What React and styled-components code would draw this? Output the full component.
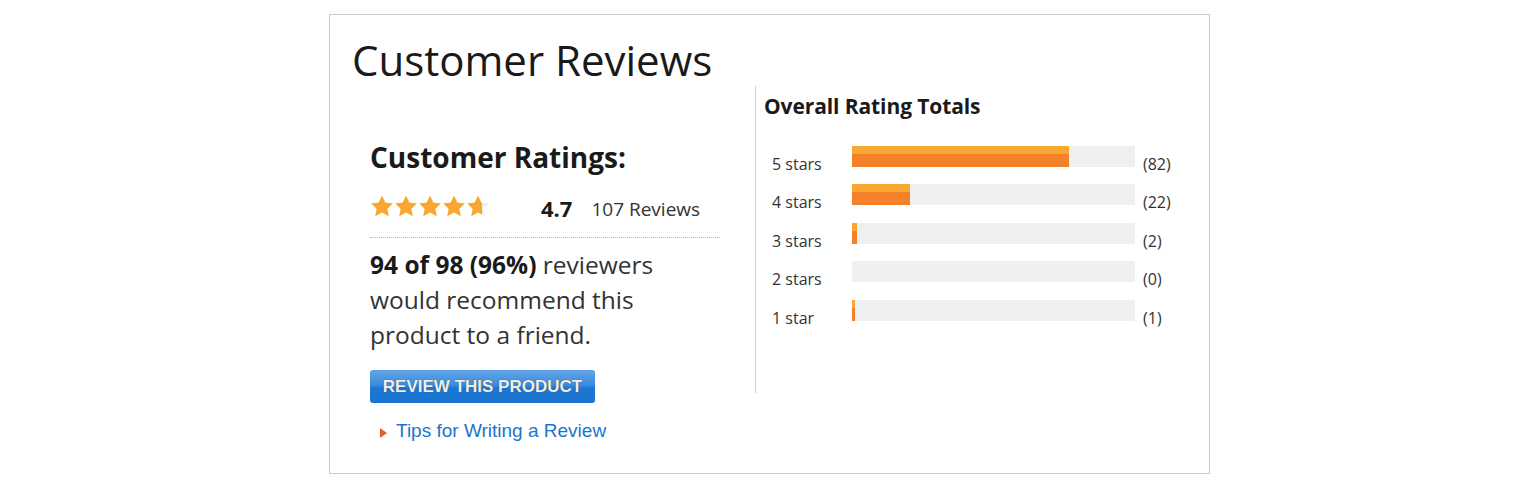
import React from "react";
import styled, { createGlobalStyle } from "styled-components";

const GlobalStyle = createGlobalStyle`
  body {
    margin: 0;
    background: #fff;
    font-family: "Open Sans", "Noto Sans", sans-serif;
    color: #333;
  }
`;

const Page = styled.div`
  padding: 14px 0 0 329px;
`;

const Box = styled.section`
  box-sizing: border-box;
  width: 881px;
  height: 460px;
  border: 1px solid #c9c9c9;
`;

const Title = styled.h1`
  margin: 0;
  padding: 19px 0 0 22px;
  font-size: 42px;
  line-height: 52px;
  font-weight: 400;
  color: #1a1a1a;
`;

const Body = styled.div`
  display: flex;
`;

const LeftCol = styled.div`
  box-sizing: border-box;
  width: 425px;
  padding: 53px 0 0 40px;
`;

const RightCol = styled.div`
  box-sizing: border-box;
  height: 307px;
  border-left: 1px solid #cfcfcf;
  padding: 5px 0 0 8px;
`;

const SubTitle = styled.h2`
  margin: 0;
  font-size: 28px;
  line-height: 36px;
  font-weight: 700;
  color: #1a1a1a;
`;

const RatingRow = styled.div`
  display: flex;
  align-items: center;
  width: 350px;
  height: 28px;
  margin-top: 17px;
  padding-bottom: 17px;
  border-bottom: 1px dotted #b5b5b5;
`;

const Stars = styled.div`
  display: flex;
  gap: 0;
  width: 171px;
`;

const Average = styled.span`
  font-size: 22px;
  font-weight: 700;
  color: #1a1a1a;
  padding-top: 3px;
`;

const Count = styled.span`
  margin-left: 19px;
  font-size: 19px;
  color: #333;
  padding-top: 5px;
`;

const Recommend = styled.p`
  margin: 9px 0 0;
  font-size: 24.5px;
  line-height: 35px;
  color: #333;

  b {
    color: #1a1a1a;
  }
`;

const ReviewButton = styled.button`
  display: block;
  width: 225px;
  height: 33px;
  margin-top: 18px;
  padding: 0;
  border: 0;
  border-radius: 3px;
  background: linear-gradient(#62a4e6 0%, #3d8ddd 45%, #1c77d3 55%, #1a74d0 100%);
  font-family: "Liberation Sans", Arial, sans-serif;
  font-size: 17px;
  font-weight: 700;
  color: #eeeeee;
  text-shadow: 0 0 1px rgba(40, 40, 40, 0.8);
  cursor: pointer;
`;

const TipsLink = styled.a`
  position: relative;
  display: inline-block;
  margin-top: 17px;
  padding-left: 26px;
  font-family: "Liberation Sans", Arial, sans-serif;
  font-size: 19px;
  line-height: 22px;
  color: #1b75cb;
  text-decoration: none;

  &::before {
    content: "";
    position: absolute;
    left: 10px;
    top: 8px;
    border-style: solid;
    border-width: 5px 0 5px 7px;
    border-color: transparent transparent transparent #e75a3c;
  }
`;

const TotalsTitle = styled.h3`
  margin: 0;
  font-size: 21px;
  line-height: 30px;
  font-weight: 700;
  color: #1a1a1a;
  letter-spacing: -0.1px;
`;

const Totals = styled.div`
  margin-top: 24.5px;
  padding-left: 8px;
`;

const TotalRow = styled.div`
  display: grid;
  grid-template-columns: 72px 283px auto;
  column-gap: 8px;
  height: 38.5px;
  font-size: 16px;
  line-height: 20px;
  color: #333;
`;

const Label = styled.span`
  padding-top: 8px;
`;

const Track = styled.div`
  height: 21px;
  background: #eeeff1;
`;

const Fill = styled.div`
  height: 100%;
  background: linear-gradient(#f9a733 0, #f9a733 8px, #f5802a 8px, #f5802a 100%);
`;

const StarIcon = ({ fill, id }) => (
  <svg width="24" height="22" viewBox="0 0 24 22">
    <defs>
      <linearGradient id={id}>
        <stop offset={fill} stopColor="#f9a631" />
        <stop offset={fill} stopColor="#ededed" />
      </linearGradient>
    </defs>
    <path
      d="M12 0.6l3.3 7 7.6 0.9-5.6 5.2 1.5 7.6L12 17.5l-6.8 3.8 1.5-7.6L1.1 8.5l7.6-0.9z"
      fill={`url(#${id})`}
    />
  </svg>
);

const totals = [
  { label: "5 stars", count: 82 },
  { label: "4 stars", count: 22 },
  { label: "3 stars", count: 2 },
  { label: "2 stars", count: 0 },
  { label: "1 star", count: 1 },
];

const TOTAL = 107;

export default function App() {
  return (
    <Page>
      <GlobalStyle />
      <Box>
        <Title>Customer Reviews</Title>
        <Body>
          <LeftCol>
            <SubTitle>Customer Ratings:</SubTitle>
            <RatingRow>
              <Stars>
                {[1, 1, 1, 1, 0.7].map((f, i) => (
                  <StarIcon key={i} fill={f} id={`star-${i}`} />
                ))}
              </Stars>
              <Average>4.7</Average>
              <Count>107 Reviews</Count>
            </RatingRow>
            <Recommend>
              <b>94 of 98 (96%)</b> reviewers
              <br />
              would recommend this
              <br />
              product to a friend.
            </Recommend>
            <ReviewButton>REVIEW THIS PRODUCT</ReviewButton>
            <TipsLink href="#">Tips for Writing a Review</TipsLink>
          </LeftCol>
          <RightCol>
            <TotalsTitle>Overall Rating Totals</TotalsTitle>
            <Totals>
              {totals.map((t) => (
                <TotalRow key={t.label}>
                  <Label>{t.label}</Label>
                  <Track>
                    <Fill style={{ width: `${(t.count / TOTAL) * 100}%` }} />
                  </Track>
                  <Label>({t.count})</Label>
                </TotalRow>
              ))}
            </Totals>
          </RightCol>
        </Body>
      </Box>
    </Page>
  );
}
